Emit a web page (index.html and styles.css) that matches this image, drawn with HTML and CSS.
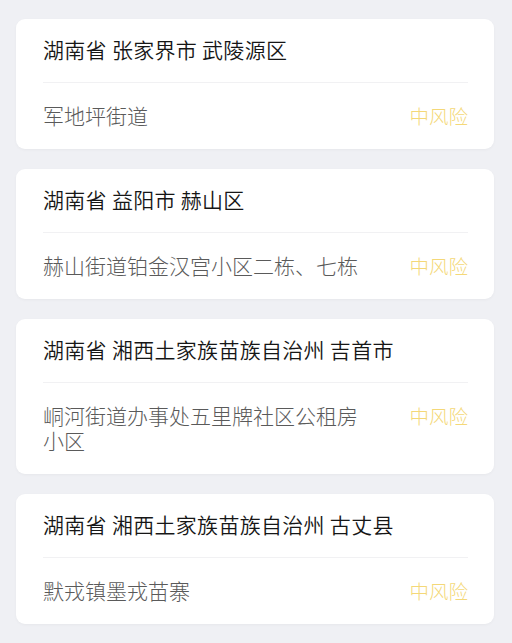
FILE: index.html
```html
<!DOCTYPE html>
<html lang="zh-CN">
<head>
<meta charset="utf-8">
<link rel="stylesheet" href="styles.css">
</head>
<body>
<div class="list">
  <div class="card">
    <div class="title">湖南省 张家界市 武陵源区</div>
    <div class="row">
      <div class="addr">军地坪街道</div>
      <div class="risk">中风险</div>
    </div>
  </div>
  <div class="card">
    <div class="title">湖南省 益阳市 赫山区</div>
    <div class="row">
      <div class="addr">赫山街道铂金汉宫小区二栋、七栋</div>
      <div class="risk">中风险</div>
    </div>
  </div>
  <div class="card">
    <div class="title">湖南省 湘西土家族苗族自治州 吉首市</div>
    <div class="row">
      <div class="addr">峒河街道办事处五里牌社区公租房小区</div>
      <div class="risk">中风险</div>
    </div>
  </div>
  <div class="card">
    <div class="title">湖南省 湘西土家族苗族自治州 古丈县</div>
    <div class="row">
      <div class="addr">默戎镇墨戎苗寨</div>
      <div class="risk">中风险</div>
    </div>
  </div>
</div>
</body>
</html>
```
FILE: styles.css
```css
html, body {
  margin: 0;
  padding: 0;
  background: #eff0f4;
}
body {
  font-family: "Noto Sans CJK SC", "Noto Sans", sans-serif;
}
.list {
  display: flex;
  flex-direction: column;
  gap: 20px;
  padding: 19px 18px 19px 16px;
}
.card {
  background: #ffffff;
  border-radius: 9px;
  box-shadow: 0 1px 3px rgba(0, 0, 0, 0.04);
  padding: 0 26px 0 27px;
}
.title {
  font-size: 21px;
  font-weight: 350;
  line-height: 25px;
  letter-spacing: 0.3px;
  color: #161616;
  padding: 18px 0 20px;
  border-bottom: 1px solid #f1f1f3;
}
.row {
  display: flex;
  align-items: flex-start;
  justify-content: space-between;
  padding: 20px 0 21px;
}
.addr {
  font-size: 21px;
  font-weight: 300;
  line-height: 25px;
  color: #5a5a5a;
  max-width: 330px;
}
.risk {
  font-size: 19.5px;
  font-weight: 300;
  line-height: 25px;
  color: #f4d878;
  flex-shrink: 0;
}
```
